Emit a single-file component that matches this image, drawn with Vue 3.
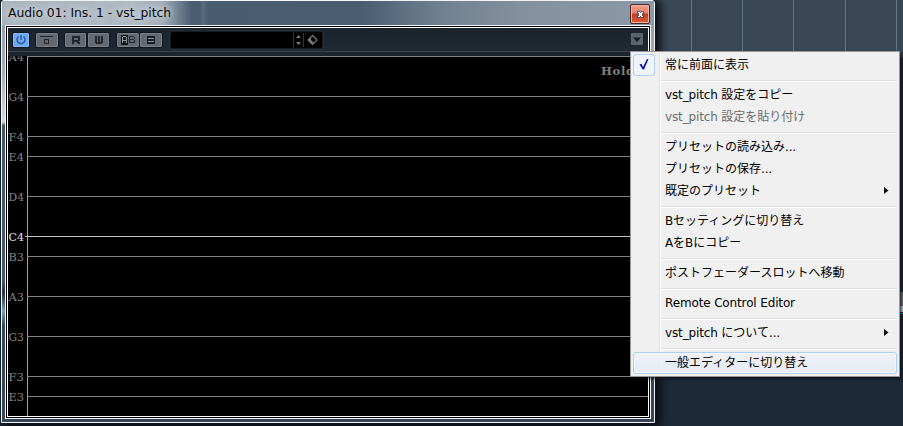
<script setup>
const notes = [
  { name: 'A4', y: 56 }, { name: 'G4', y: 96 }, { name: 'F4', y: 136 }, { name: 'E4', y: 156 },
  { name: 'D4', y: 196 }, { name: 'C4', y: 236 }, { name: 'B3', y: 256 }, { name: 'A3', y: 296 },
  { name: 'G3', y: 336 }, { name: 'F3', y: 376 }, { name: 'E3', y: 396 }
]
const gridLines = [691, 742, 793, 845, 896]
const groups = [
  [{ label: [['常に前面に表示']], checked: true }],
  [{ label: [['vst_pitch ', 1], ['設定をコピー']] }, { label: [['vst_pitch ', 1], ['設定を貼り付け']], disabled: true }],
  [{ label: [['プリセットの読み込み'], ['...', 1]] }, { label: [['プリセットの保存'], ['...', 1]] }, { label: [['既定のプリセット']], sub: true }],
  [{ label: [['B', 1], ['セッティングに切り替え']] }, { label: [['A', 1], ['を'], ['B', 1], ['にコピー']] }],
  [{ label: [['ポストフェーダースロットへ移動']] }],
  [{ label: [['Remote Control Editor', 1]] }],
  [{ label: [['vst_pitch ', 1], ['について'], ['...', 1]], sub: true }],
  [{ label: [['一般エディターに切り替え']], hot: true }]
]
</script>

<template>
  <div class="desktop">
    <svg class="backdrop" width="903" height="426" shape-rendering="crispEdges">
      <rect width="903" height="426" fill="#1d2938" />
      <rect x="655" width="248" height="58" fill="#394655" />
      <rect v-for="x in gridLines" :key="x" :x="x" width="1" height="58" fill="#617589" />
      <rect x="900" y="292" width="3" height="14" fill="#737981" />
      <rect x="900" y="306" width="3" height="6" fill="#c5d8ee" />
      <rect x="900" y="313" width="3" height="1" fill="#329cac" />
    </svg>

    <section class="window">
      <header class="titlebar">
        <span class="title">Audio 01: Ins. 1 - vst_pitch</span>
        <button class="close" aria-label="Close">
          <svg width="18" height="18" viewBox="0 0 18 18" shape-rendering="crispEdges">
            <path d="M6 6h3v1h1V6h3v3h-1v1h1v3h-3v-1H9v1H6v-3h1V9H6z" fill="#525767" />
            <path d="M7 7h2v1h1V7h2v1h-1v3h1v1h-2v-1H9v1H7v-1h1V8H7z" fill="#fff" />
          </svg>
        </button>
      </header>
      <div class="client">
        <div class="toolbar">
          <div class="btn power">
            <svg width="14" height="12" viewBox="0 0 14 12" fill="none" stroke="#28598f" stroke-width="1.400">
              <path d="M4.500 2.500A4 4 0 1 0 9.500 2.500M7 1v5" />
            </svg>
          </div>
          <div class="btn bypass">
            <svg width="20" height="12" viewBox="0 0 20 12" shape-rendering="crispEdges">
              <path d="M3 2h13v1H3zM7 5h5v5H7zM8 6v3h3V6z" fill="#22262b" fill-rule="evenodd" />
            </svg>
          </div>
          <div class="btn read">
            <svg width="19" height="12" viewBox="0 0 19 12" shape-rendering="crispEdges">
              <path d="M6 2h8v5h-1v1h1v2h-2V9h-1V8H8v2H6zM8 4v2h4V4z" fill="#22262b" fill-rule="evenodd" />
            </svg>
          </div>
          <div class="btn write">
            <svg width="19" height="12" viewBox="0 0 19 12" shape-rendering="crispEdges">
              <path d="M6 2h2v6h1V2h2v6h1V2h2v7h-1v1H7V9H6z" fill="#22262b" />
            </svg>
          </div>
          <div class="btn ab">
            <svg width="20" height="12" viewBox="0 0 20 12" shape-rendering="crispEdges">
              <path d="M3 1h7v10H3z" fill="#171b20" />
              <path d="M5 2h3v1H5zM4 3h1v6H4zM8 3h1v6H8zM5 6h3v1H5z" fill="#8e969e" />
              <path d="M11 2h5v1h1v2h-1v1h1v3h-6zM12 3v2h4V3zM12 6v2h4V6z" fill="#22262b" fill-rule="evenodd" />
            </svg>
          </div>
          <div class="btn equal">
            <svg width="20" height="12" viewBox="0 0 20 12" shape-rendering="crispEdges">
              <path d="M6 2h8v8H6z" fill="#171b20" />
              <path d="M7 4h6v1H7zM7 7h6v1H7z" fill="#9299a0" />
            </svg>
          </div>
          <div class="preset">
            <svg width="151" height="16" viewBox="0 0 151 16">
              <path d="M122.500 1v14M132.500 1v14" stroke="#34383c" />
              <path d="M125 6h5l-2.500-3zM125 10h5l-2.500 3z" fill="#777" />
              <path d="M141.500 3.500l4.500 4.500-4.500 4.500-4.500-4.500z" fill="none" stroke="#77797b" stroke-width="1.200" />
              <path d="M137 8l3-3v3l3 3-1.500 1.500z" fill="#77797b" />
            </svg>
          </div>
          <div class="drop">
            <svg width="12" height="12" viewBox="0 0 12 12"><path d="M2 4.500h8L6 9z" fill="#14191f" /></svg>
          </div>
        </div>
        <div class="plot">
          <svg class="staff" width="640" height="360" viewBox="8 56 640 360" shape-rendering="crispEdges">
            <rect x="27" y="56" width="1" height="360" fill="#a0a0a0" />
            <rect
              v-for="n in notes" :key="n.y" :x="n.name === 'C4' ? 25 : 27" :y="n.y" width="621" height="1"
              :fill="n.name === 'C4' ? '#c8c8c8' : '#808080'"
            />
            <text
              v-for="n in notes" :key="n.name" x="8.500" :y="n.y + 5" textLength="15.500" lengthAdjust="spacingAndGlyphs"
              class="note" :class="{ root: n.name === 'C4' }"
            >{{ n.name }}</text>
            <text x="601" y="75" textLength="33" lengthAdjust="spacing" class="hold">Hold</text>
          </svg>
        </div>
      </div>
    </section>

    <nav class="menu">
      <div v-for="(group, g) in groups" :key="g" class="group">
        <div v-for="(item, i) in group" :key="i" class="item" :class="{ disabled: item.disabled, hot: item.hot }">
          <span class="gutter">
            <span v-if="item.checked" class="check">
              <svg width="20" height="20" viewBox="0 0 20 20"><path d="M5.500 9.500l2-.7 1.500 3.200L13 4h1.500L10 14.500H8.700z" fill="#0c12a1" /></svg>
            </span>
          </span>
          <span class="label"><span v-for="(part, p) in item.label" :key="p" :class="{ latin: part[1] }">{{ part[0] }}</span></span>
          <svg v-if="item.sub" class="arrow" width="5" height="8" viewBox="0 0 5 8"><path d="M0 0l4.500 3.500L0 7z" fill="#111" /></svg>
        </div>
      </div>
    </nav>
  </div>
</template>

<style>
body { margin: 0; overflow: hidden; }
</style>

<style scoped>
* { box-sizing: border-box; }
.desktop { position: relative; width: 903px; height: 426px; overflow: hidden; background: #1d2938; }
.backdrop { position: absolute; inset: 0; }
.window {
  position: absolute; left: 1px; top: 0; width: 654px; height: 423px; padding: 0 3px 3px;
  border: 1px solid #f2f5f8; border-radius: 3px 3px 0 0;
  background: linear-gradient(#8d9aa8 0, #a7adb5 70px, #d8dadd 121px, #7e858e 123px, #45586c 125px, #44576b 280px, #27303b 292px, #6f9dc5 310px, #34485c 325px, #384758 100%);
  box-shadow: 3px 2px 9px 2px #080b10;
}
.titlebar {
  display: flex; align-items: flex-start; justify-content: space-between; height: 24px; margin: 0 -3px; padding: 0 4px 0 6px;
  background:
    linear-gradient(90deg, #a9b3bd 0, #b0b9c2 130px, #a3adb8 160px, #6f8192 176px, #4a5c70 190px, #485c70 198px, #5a6c7f 201px, #485c70 207px, #4a5d71 360px, #708191 440px, #84909d 520px, #8c99a7 100%);
}
.title {
  height: 23px; font: 12.4px/23px "DejaVu Sans", sans-serif; letter-spacing: -.06px; color: #080808; white-space: nowrap;
  text-shadow: 0 0 7px #dce3e9, 0 0 10px #dce3e9;
}
.close {
  display: flex; width: 20px; height: 20px; margin-top: 3px; padding: 0; border: 1px solid #4c2525; border-radius: 2px;
  background: linear-gradient(#ef9d8b 0, #e58672 8px, #c63d21 9px, #d95d3f 100%); box-shadow: inset 0 0 0 1px #f4b4a4;
}
.client { width: 646px; height: 394px; border: 1px solid #f4f4f6; box-shadow: inset 0 0 0 1px #000, inset 0 0 0 2px #fff; padding: 2px; }
.toolbar {
  display: flex; align-items: flex-start; height: 28px; padding: 5px 5px 0;
  background: linear-gradient(#1b232b 0, #202a34 23px, #3a434c 23px, #3a434c 24px, #1c252e 24px);
}
.btn { display: flex; align-items: center; justify-content: center; height: 14px; border: 1px solid #7a8087; border-radius: 1px; background: #626970; box-shadow: 0 0 1px 1px #10161c; }
.btn svg { flex: none; }
.power { width: 16px; background: #6daaf6; border-color: #83b8fa; }
.bypass { width: 22px; margin-left: 7px; }
.read { width: 21px; margin-left: 7px; }
.write { width: 21px; margin-left: 2px; }
.ab { width: 22px; margin-left: 8px; }
.equal { width: 22px; margin-left: 1px; }
.preset { display: flex; width: 151px; height: 16px; margin: -1px 0 0 9px; background: #000; border-radius: 2px; box-shadow: 0 0 0 1px #151b21, 0 0 2px 2px #29323c; }
.drop { display: flex; width: 12px; height: 12px; margin-left: auto; background: #5b646d; border-radius: 1px; }
.plot { height: 360px; background: #000; }
.staff { display: block; }
.note { font: 11px "DejaVu Serif", serif; fill: #858585; }
.root { fill: #e0e0e0; }
.hold { font: bold 11.5px "DejaVu Serif", serif; fill: #808080; }
.menu {
  position: absolute; left: 630px; top: 51px; width: 270px; height: 326px; padding: 2px;
  border: 1px solid #979797; box-shadow: 2px 2px 3px #080b10b0;
  background: linear-gradient(90deg, transparent 28px, #e0e0e0 28px, #e0e0e0 29px, #fff 29px, #fff 30px, transparent 30px) 0 2px / 100% 320px no-repeat, #f0f0f0;
}
.group + .group { padding-top: 8px; background: linear-gradient(#e0e0e0, #e0e0e0) 28px 4px / 236px 1px no-repeat, linear-gradient(#fff, #fff) 28px 5px / 236px 1px no-repeat; }
.item { display: flex; align-items: center; height: 22px; color: #000; font: 12px/20px "Noto Sans CJK JP", sans-serif; white-space: nowrap; border-radius: 3px; }
.gutter { display: flex; width: 32px; height: 22px; }
.check { display: flex; width: 22px; height: 22px; border: 1px solid #aecff7; border-radius: 3px; background: #f0f4fa; }
.label { height: 22px; }
.latin { font-family: "DejaVu Sans", sans-serif; letter-spacing: -.14px; }
.disabled { color: #6d6d6d; }
.hot { box-shadow: inset 0 0 0 1px #aecff7, inset 0 0 0 2px #f5f8fc; background: linear-gradient(#eff2f8d0, #e3eaf5d0); }
.arrow { margin: 0 8px 0 auto; }
</style>
